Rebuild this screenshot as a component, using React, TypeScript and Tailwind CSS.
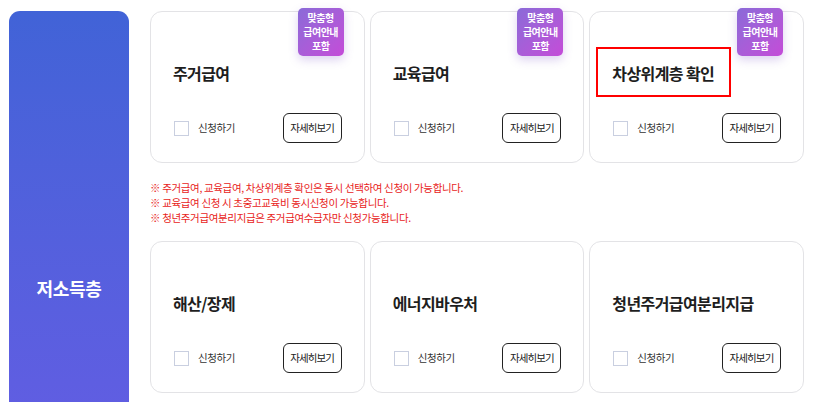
const FONT = { fontFamily: '"Noto Sans CJK KR", "Noto Sans", sans-serif' };

type Item = { title: string; badge?: boolean; highlight?: boolean };

const row1: Item[] = [
  { title: "주거급여", badge: true },
  { title: "교육급여", badge: true },
  { title: "차상위계층 확인", badge: true, highlight: true },
];

const row2: Item[] = [
  { title: "해산/장제" },
  { title: "에너지바우처" },
  { title: "청년주거급여분리지급" },
];

function Card({ item }: { item: Item }) {
  return (
    <div className="relative h-[152px] rounded-[12px] border border-[#e3e3e6] bg-white px-[22px] pt-[49px]">
      {item.badge && (
        <div className="absolute right-[20px] top-[-4px] flex h-[48px] w-[46px] items-center justify-center rounded-[5px] bg-gradient-to-br from-[#8a6ad8] to-[#c44bd8] text-center text-[10px] font-bold leading-[14px] tracking-[-0.5px] text-white shadow-[0_4px_10px_rgba(120,80,200,0.25)]">
          맞춤형
          <br />
          급여안내
          <br />
          포함
        </div>
      )}
      {item.highlight && (
        <div className="absolute left-[6px] top-[35px] h-[50px] w-[135px] border-2 border-[#ff0000]" />
      )}
      <h3 className="h-[24px] text-[16px] font-bold leading-[24px] tracking-[-0.6px] text-[#1e1e1e]">{item.title}</h3>
      <div className="mt-[28px] flex h-[30px] items-center justify-between">
        <label className="flex items-center pl-[1px]">
          <span className="h-[15px] w-[15px] border border-[#c9cfe0] bg-white" />
          <span className="ml-[9px] text-[10.5px] tracking-[-0.4px] text-[#333]">신청하기</span>
        </label>
        <button className="h-[30px] w-[59px] rounded-[6px] border border-[#222] bg-white text-[10.5px] tracking-[-0.9px] text-[#222]">
          자세히보기
        </button>
      </div>
    </div>
  );
}

export default function App() {
  return (
    <div className="flex h-[402px] overflow-hidden bg-white pl-[9px] pt-[11px]" style={FONT}>
      {/* 구분 */}
      <aside className="flex h-[554px] w-[120px] shrink-0 items-center justify-center rounded-t-[11px] bg-gradient-to-b from-[#4163d7] to-[#6a5be6]">
        <span className="text-[18px] font-bold tracking-[-0.3px] text-white">저소득층</span>
      </aside>

      <main className="ml-[21px] w-[654px]">
        <div className="grid grid-cols-3 gap-[5px]">
          {row1.map((it) => (
            <Card key={it.title} item={it} />
          ))}
        </div>

        <ul className="mt-[17px] text-[10.5px] leading-[15px] tracking-[-0.35px] text-[#e8231b]">
          <li>※ 주거급여, 교육급여, 차상위계층 확인은 동시 선택하여 신청이 가능합니다.</li>
          <li>※ 교육급여 신청 시 초중고교육비 동시신청이 가능합니다.</li>
          <li>※ 청년주거급여분리지급은 주거급여수급자만 신청가능합니다.</li>
        </ul>

        <div className="mt-[16px] grid grid-cols-3 gap-[5px]">
          {row2.map((it) => (
            <Card key={it.title} item={it} />
          ))}
        </div>
      </main>
    </div>
  );
}
